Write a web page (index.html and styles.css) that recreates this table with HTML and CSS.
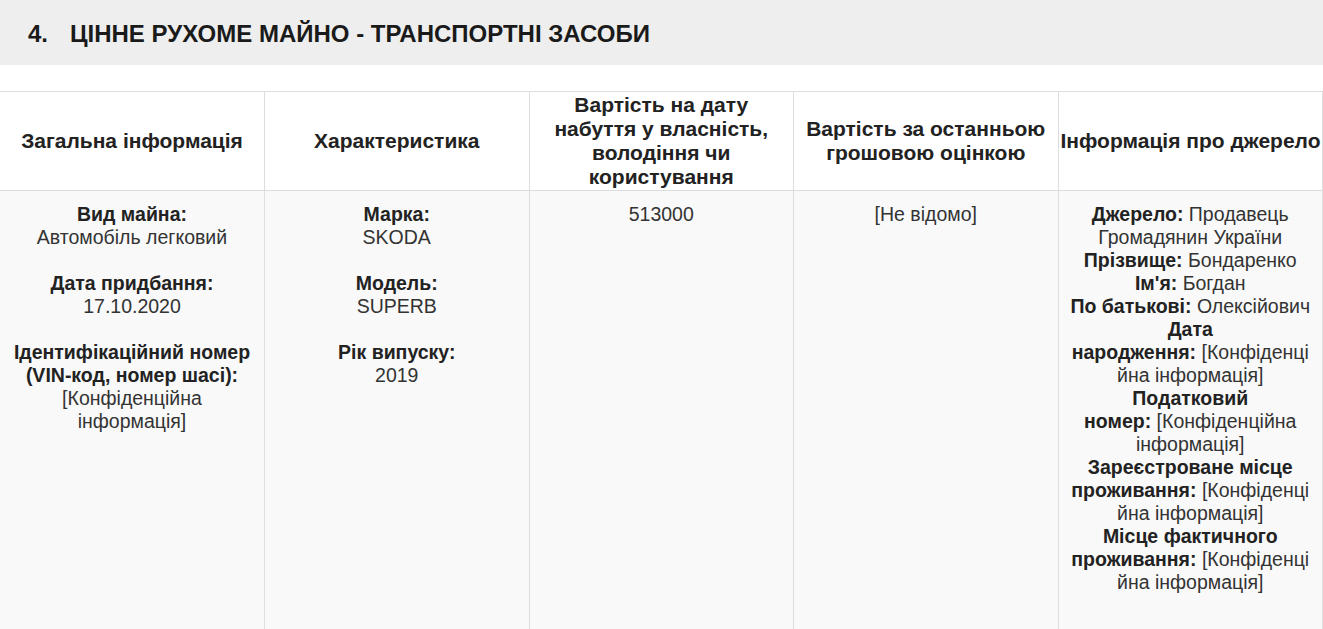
FILE: index.html
```html
<!DOCTYPE html>
<html lang="uk">
<head>
<meta charset="utf-8">
<title>Цінне рухоме майно</title>
<link rel="stylesheet" href="styles.css">
</head>
<body>
<div class="section-head">
  <h2 class="section-title"><span class="num">4.</span>ЦІННЕ РУХОМЕ МАЙНО - ТРАНСПОРТНІ ЗАСОБИ</h2>
</div>
<table class="decl">
  <thead>
    <tr>
      <th>Загальна інформація</th>
      <th>Характеристика</th>
      <th>Вартість на дату<br>набуття у власність,<br>володіння чи<br>користування</th>
      <th>Вартість за останньою<br>грошовою оцінкою</th>
      <th>Інформація про джерело</th>
    </tr>
  </thead>
  <tbody>
    <tr>
      <td>
        <div class="item"><b>Вид майна:</b><br>Автомобіль легковий</div>
        <div class="item"><b>Дата придбання:</b><br>17.10.2020</div>
        <div class="item"><b>Ідентифікаційний номер (VIN-код, номер шасі):</b><br>[Конфіденційна інформація]</div>
      </td>
      <td>
        <div class="item"><b>Марка:</b><br>SKODA</div>
        <div class="item"><b>Модель:</b><br>SUPERB</div>
        <div class="item"><b>Рік випуску:</b><br>2019</div>
      </td>
      <td>513000</td>
      <td>[Не відомо]</td>
      <td class="src">
        <b>Джерело:</b> Продавець<br>Громадянин України<br>
        <b>Прізвище:</b> Бондаренко<br>
        <b>Ім'я:</b> Богдан<br>
        <b>По батькові:</b> Олексійович<br>
        <b>Дата</b><br><b>народження:</b> [Конфіденці<br>йна інформація]<br>
        <b>Податковий</b><br><b>номер:</b> [Конфіденційна<br>інформація]<br>
        <b>Зареєстроване місце<br>проживання:</b> [Конфіденці<br>йна інформація]<br>
        <b>Місце фактичного<br>проживання:</b> [Конфіденці<br>йна інформація]
      </td>
    </tr>
  </tbody>
</table>
</body>
</html>
```

FILE: styles.css
```css
html, body {
  margin: 0;
  padding: 0;
  background: #ffffff;
  font-family: "Liberation Sans", Arial, sans-serif;
  color: #222222;
}

.section-head {
  background: #eeeeee;
  height: 65px;
  display: flex;
  align-items: center;
  padding-left: 28px;
  margin-bottom: 26px;
}

.section-title {
  margin: 0;
  font-size: 24px;
  font-weight: bold;
  color: #1a1a1a;
  line-height: 28px;
  padding-top: 2px;
}

.section-title .num {
  display: inline-block;
  width: 42px;
}

.decl {
  width: 100%;
  border-collapse: collapse;
  table-layout: fixed;
  font-size: 19.5px;
  line-height: 23px;
}

.decl th,
.decl td {
  border: 1px solid #dddddd;
  text-align: center;
}

.decl th:first-child,
.decl td:first-child {
  border-left: none;
}

.decl th {
  background: #ffffff;
  font-size: 21px;
  line-height: 24px;
  font-weight: bold;
  padding: 1px 2px;
  height: 96px;
  vertical-align: middle;
  color: #222222;
  white-space: nowrap;
}

.decl td {
  background: #f9f9f9;
  vertical-align: top;
  padding: 12px 12px;
  height: 440px;
  color: #333333;
}

.decl td b {
  color: #222222;
}

.decl td.src {
  white-space: nowrap;
  padding-left: 4px;
  padding-right: 4px;
}

.item {
  margin-bottom: 23px;
}

.item:last-child {
  margin-bottom: 0;
}
```
